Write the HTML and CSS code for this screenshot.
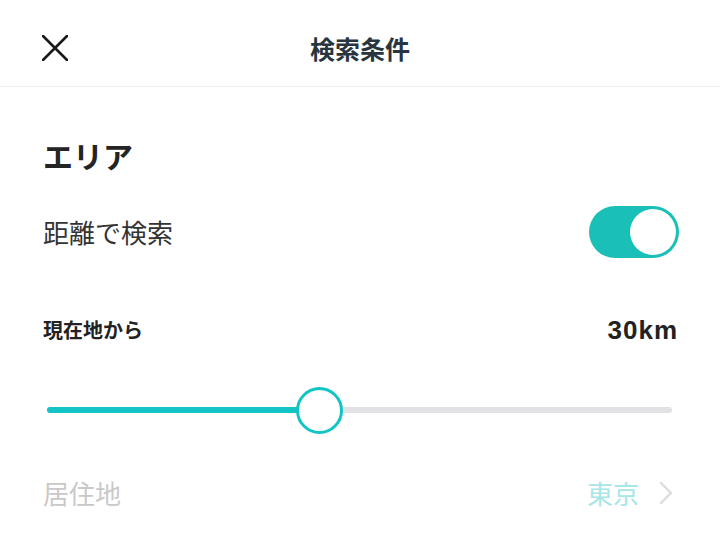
FILE: index.html
```html
<!DOCTYPE html>
<html lang="ja">
<head>
<meta charset="utf-8">
<title>検索条件</title>
<link rel="stylesheet" href="styles.css">
</head>
<body>
<header class="header">
  <button class="close" aria-label="閉じる">
    <svg width="26" height="26" viewBox="0 0 26 26"><path d="M1 1 L25 25 M25 1 L1 25" stroke="#1a1a1a" stroke-width="2.6" stroke-linecap="round" fill="none"/></svg>
  </button>
  <h1 class="title">検索条件</h1>
  <span></span>
</header>
<main class="content">
  <h2 class="section-title">エリア</h2>
  <div class="row row-toggle">
    <span class="label">距離で検索</span>
    <span class="toggle"><span class="knob"></span></span>
  </div>
  <div class="row row-distance">
    <span class="sub-label">現在地から</span>
    <span class="value">30km</span>
  </div>
  <div class="slider">
    <div class="track">
      <div class="fill" style="width:43.6%"></div>
      <div class="thumb" style="left:43.6%"></div>
    </div>
  </div>
  <div class="row row-home">
    <span class="label disabled">居住地</span>
    <span class="pick">東京
      <svg width="14" height="24" viewBox="0 0 14 24"><polyline points="2,2 12,12 2,22" stroke="#dcdcdc" stroke-width="2.4" fill="none" stroke-linecap="round" stroke-linejoin="round"/></svg>
    </span>
  </div>
</main>
</body>
</html>
```

FILE: styles.css
```css
* { box-sizing: border-box; }
html, body { margin: 0; padding: 0; background: #fff; }
body {
  width: 720px;
  font-family: "Noto Sans CJK JP", "Noto Sans", sans-serif;
  color: #222;
}
.header {
  height: 87px;
  border-bottom: 1px solid #f1f1f1;
  display: grid;
  grid-template-columns: 1fr auto 1fr;
  align-items: center;
}
.close {
  justify-self: start;
  border: 0;
  background: none;
  padding: 0;
  width: 26px;
  height: 26px;
  display: flex;
  margin: 10px 0 0 42px;
}
.title {
  margin: 10px 0 0;
  font-size: 25px;
  font-weight: 700;
  color: #28343e;
  line-height: 30px;
}
.content {
  padding: 41px 42px 0 43px;
}
.section-title {
  margin: 0;
  height: 60px;
  display: flex;
  align-items: center;
  font-size: 30px;
  font-weight: 700;
  color: #242424;
  line-height: 36px;
  margin-top: -3px;
  margin-bottom: 3px;
}
.row {
  display: flex;
  align-items: center;
  justify-content: space-between;
}
.row-toggle { height: 88px; }
.row-distance { height: 108px; }
.row-home { height: 114px; }
.label {
  font-size: 26px;
  color: #333;
  line-height: 32px;
}
.label.disabled { color: #c9c9c9; }
.toggle {
  width: 90px;
  height: 52px;
  border-radius: 26px;
  background: #1abfb7;
  padding: 3px;
  display: flex;
  justify-content: flex-end;
  margin-right: -1px;
}
.knob {
  width: 46px;
  height: 46px;
  border-radius: 50%;
  background: #fff;
}
.sub-label {
  font-size: 20px;
  font-weight: 700;
  color: #222;
  line-height: 26px;
}
.value {
  font-family: "Liberation Sans", Arial, sans-serif;
  font-size: 26px;
  font-weight: 700;
  letter-spacing: 1px;
  color: #222;
  line-height: 30px;
}
.slider {
  height: 52px;
  display: flex;
  align-items: center;
  padding: 0 6px 0 4px;
}
.track {
  position: relative;
  flex: 1;
  height: 6px;
  border-radius: 3px;
  background: #e2e2e4;
}
.fill {
  height: 6px;
  border-radius: 3px;
  background: #12c4c6;
}
.thumb {
  position: absolute;
  top: 50%;
  width: 47px;
  height: 47px;
  margin: -23.5px 0 0 -23.5px;
  border-radius: 50%;
  background: #fff;
  border: 3px solid #12c4c6;
}
.pick {
  display: flex;
  align-items: center;
  gap: 20px;
  font-size: 26px;
  color: #a6e6e6;
  line-height: 32px;
  margin-right: 5px;
}
```
